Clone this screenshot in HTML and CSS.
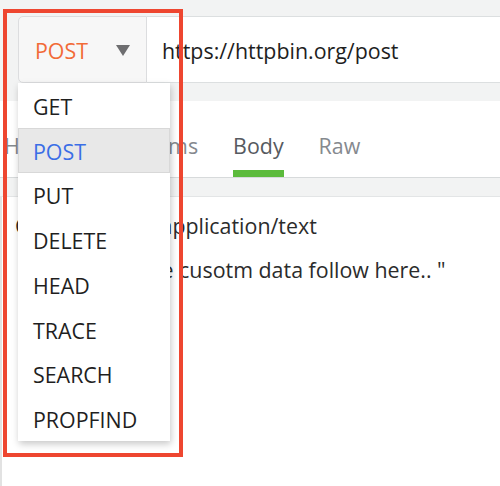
FILE: index.html
```html
<!DOCTYPE html>
<html>
<head>
<meta charset="utf-8">
<link rel="stylesheet" href="styles.css">
</head>
<body>
<div class="app">
  <div class="strip"></div>
  <div class="url-row">
    <div class="method">
      <span class="method-name">POST</span>
      <svg class="caret" width="14" height="11" viewBox="0 0 14 11"><polygon points="0,0 14,0 7,11" fill="#6e6e70"/></svg>
    </div>
    <div class="url">https://httpbin.org/post</div>
  </div>
  <div class="band"></div>
  <div class="tabs">
    <div class="tab">Headers</div>
    <div class="tab">Params</div>
    <div class="tab active">Body</div>
    <div class="tab raw">Raw</div>
  </div>
  <div class="band band2"></div>
  <div class="content">
    <div class="line">Content-Type: application/text</div>
    <div class="line indent">"Here are the cusotm data follow here.. "</div>
  </div>

  <ul class="menu">
    <li class="item">GET</li>
    <li class="item selected">POST</li>
    <li class="item">PUT</li>
    <li class="item">DELETE</li>
    <li class="item">HEAD</li>
    <li class="item">TRACE</li>
    <li class="item">SEARCH</li>
    <li class="item">PROPFIND</li>
  </ul>
  <div class="highlight"></div>
</div>
</body>
</html>
```
FILE: styles.css
```css
* { box-sizing: border-box; }
html, body { margin: 0; padding: 0; }
body {
  background: #ffffff;
  font-family: "Open Sans", "DejaVu Sans", sans-serif;
  font-size: 21.4px;
  color: #222;
}
.app {
  position: relative;
  width: 500px;
  height: 486px;
  overflow: hidden;
}
.strip {
  height: 16px;
  background: #f2f3f3;
}
.url-row {
  display: flex;
  height: 67px;
  background: #f2f3f3;
  padding-left: 18px;
}
.method {
  width: 129px;
  display: flex;
  align-items: center;
  justify-content: space-between;
  padding: 2px 16px 0 16px;
  background: #f7f7f7;
  border: 1px solid #dcdddf;
  border-radius: 5px 0 0 5px;
}
.method-name {
  color: #f26b38;
  line-height: 1;
}
.url {
  flex: 1;
  display: flex;
  align-items: center;
  padding-left: 15px;
  padding-top: 2px;
  background: #fff;
  border-top: 1px solid #dcdfe0;
  border-bottom: 1px solid #dcdfe0;
  color: #1e1e1e;
}
.band {
  height: 18px;
  background: #f2f3f3;
}
.tabs {
  height: 77px;
  display: flex;
  align-items: stretch;
  gap: 35px;
  padding-left: 4px;
  border-bottom: 1px solid #d7dadb;
  background: #fff;
}
.tab {
  display: flex;
  align-items: center;
  padding-top: 20px;
  color: #85898e;
  border-bottom: 7px solid transparent;
}
.tab.active {
  color: #565a60;
  border-bottom-color: #5cbb3c;
}
.band2 {
  height: 19px;
  border-bottom: 1px solid #e3e5e6;
}
.content {
  padding: 7px 0 0 13px;
  border-left: 2px solid #e2e2e2;
  height: 300px;
  color: #2b2b2b;
}
.line {
  line-height: 44px;
  white-space: nowrap;
}
.line.indent {
  padding-left: 25px;
}
.menu {
  position: absolute;
  left: 18px;
  top: 83px;
  width: 152px;
  margin: 0;
  padding: 0;
  list-style: none;
  background: #fff;
  box-shadow: 1px 3px 7px rgba(0, 0, 0, 0.22);
}
.item {
  height: 44.75px;
  display: flex;
  align-items: center;
  padding-left: 15px;
  padding-top: 2px;
  color: #1f1f1f;
}
.item.selected {
  background: #e8e8e8;
  border: 1px solid #d8d8d8;
  padding-left: 14px;
  color: #3b6ee6;
}
.highlight {
  position: absolute;
  left: 3px;
  top: 9px;
  width: 180px;
  height: 448px;
  border: 4.5px solid #ee4630;
  pointer-events: none;
}
```
